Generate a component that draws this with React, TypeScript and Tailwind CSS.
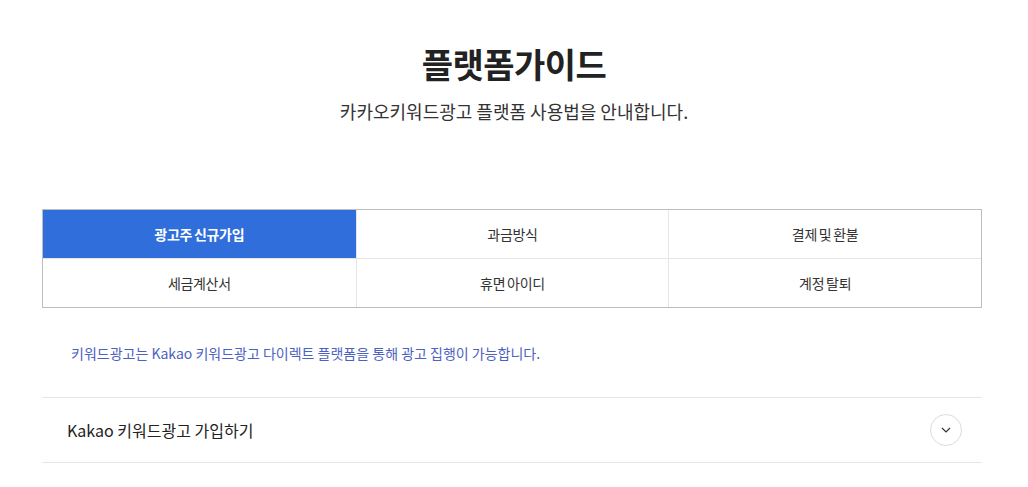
import React from "react";

const font = { fontFamily: '"Noto Sans CJK KR", "Noto Sans", sans-serif' };

export default function App() {
  const tabs = [
    ["광고주 신규가입", "과금방식", "결제 및 환불"],
    ["세금계산서", "휴면 아이디", "계정 탈퇴"],
  ];
  return (
    <div className="w-[1028px] h-[487px] bg-white overflow-hidden" style={font}>
      <div className="flex flex-col items-center pt-[40px]">
        <h1 className="text-[34px] leading-[48px] font-bold text-[#222] tracking-[-0.5px]">플랫폼가이드</h1>
        <p className="mt-[10px] text-[18px] leading-[26px] text-[#333]">카카오키워드광고 플랫폼 사용법을 안내합니다.</p>
      </div>
      <div className="ml-[42px] w-[940px] mt-[85px] border border-[#bdbdbd]">
        {tabs.map((row, ri) => (
          <div key={ri} className={`grid grid-cols-3 ${ri === 1 ? "border-t border-[#e6e6e6]" : ""}`}>
            {row.map((t, ci) => {
              const active = ri === 0 && ci === 0;
              return (
                <div
                  key={ci}
                  className={`h-[48px] flex items-center justify-center text-[14px] tracking-[-0.3px] [word-spacing:-1px] ${ci > 0 ? "border-l border-[#e6e6e6]" : ""} ${active ? "bg-[#306fdb] text-white font-bold" : "text-[#333]"}`}
                >
                  {t}
                </div>
              );
            })}
          </div>
        ))}
      </div>
      <p className="ml-[42px] w-[940px] mt-[35px] pl-[29px] text-[14px] leading-[20px] text-[#4d62bf]">
        키워드광고는 Kakao 키워드광고 다이렉트 플랫폼을 통해 광고 집행이 가능합니다.
      </p>
      <div className="ml-[42px] w-[940px] mt-[34px] border-t border-b border-[#e6e6e6] h-[66px] flex items-center justify-between pl-[25px] pr-[20px]">
        <span className="text-[16px] text-[#222]">Kakao 키워드광고 가입하기</span>
        <div className="w-[32px] h-[32px] rounded-full border border-[#dcdcdc] flex items-center justify-center">
          <svg width="10" height="6" viewBox="0 0 10 6" fill="none">
            <path d="M1 1l4 4 4-4" stroke="#333" strokeWidth="1.2" />
          </svg>
        </div>
      </div>
    </div>
  );
}
